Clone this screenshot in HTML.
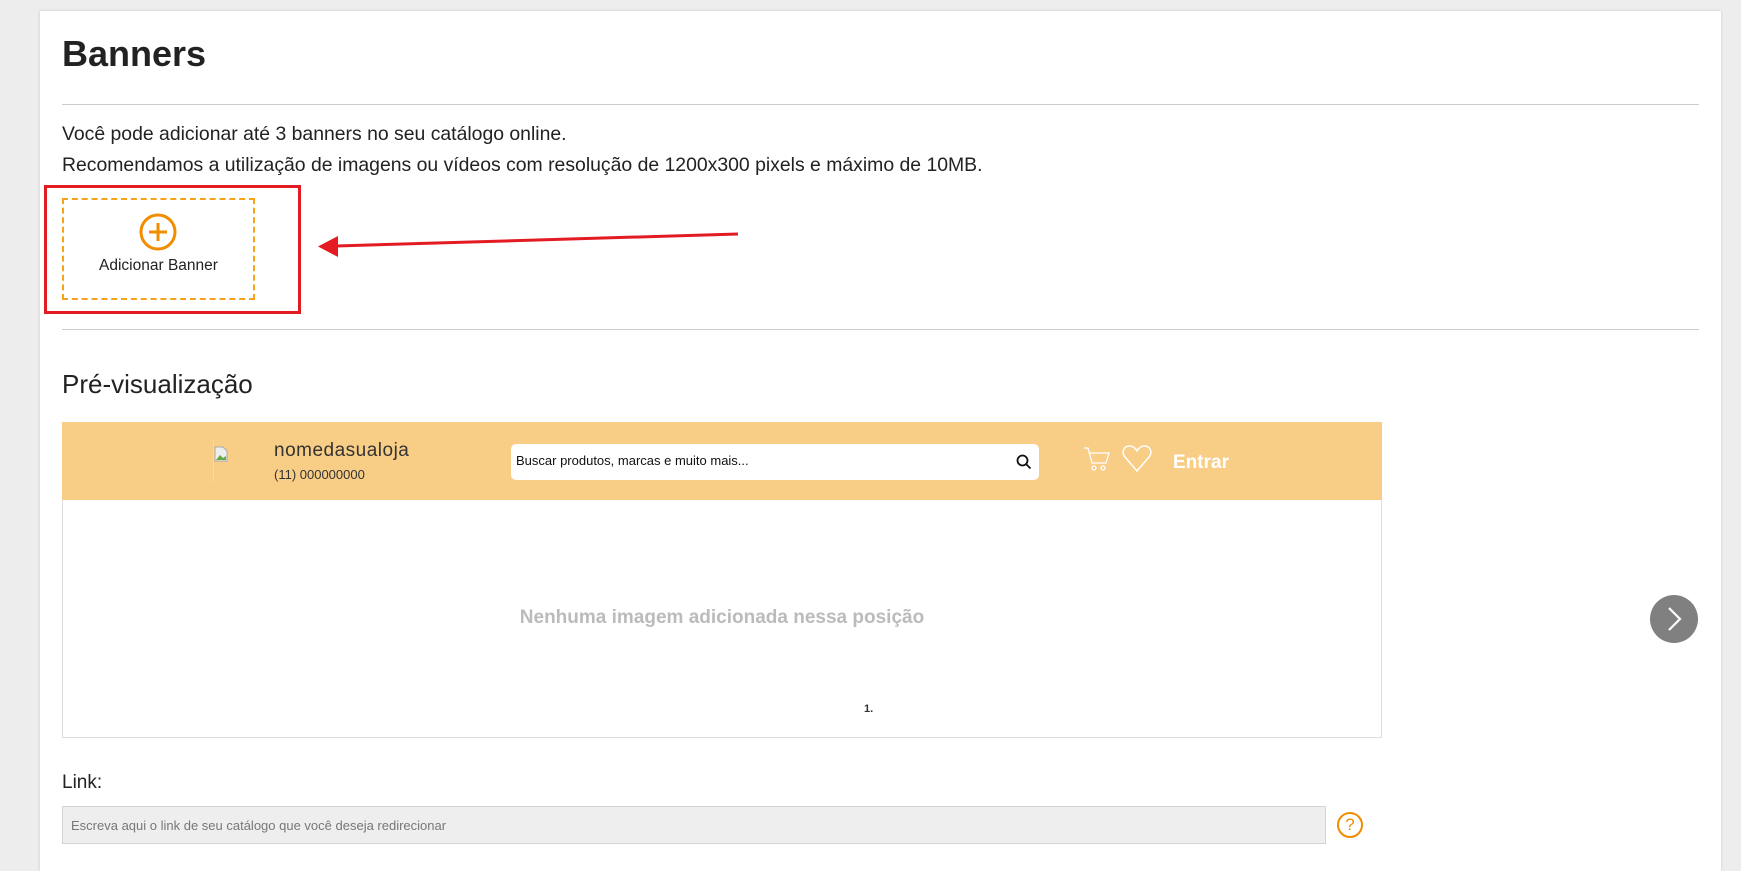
<!DOCTYPE html>
<html><head><meta charset="utf-8"><style>
*{box-sizing:border-box;margin:0;padding:0}
body{width:1741px;height:856px;overflow:hidden;background:#ededed;font-family:"Liberation Sans",sans-serif;color:#222;position:relative}
.card{position:absolute;left:40px;top:11px;width:1681px;height:860px;background:#fff;box-shadow:0 0 3px rgba(0,0,0,.15)}
.a{position:absolute;white-space:nowrap}
.hr{position:absolute;left:62px;width:1637px;height:1px;background:#ccc}
</style></head><body>
<div class="card"></div>
<div class="a" style="left:62px;top:33px;font-size:36px;font-weight:bold;color:#222">Banners</div>
<div class="hr" style="top:104px"></div>
<div class="a" style="left:62px;top:123px;font-size:19.4px">Você pode adicionar até 3 banners no seu catálogo online.</div>
<div class="a" style="left:62px;top:154px;font-size:19.4px">Recomendamos a utilização de imagens ou vídeos com resolução de 1200x300 pixels e máximo de 10MB.</div>
<div class="a" style="left:44px;top:185px;width:257px;height:129px;border:3px solid #e31b23"></div>
<div class="a" style="left:62px;top:198px;width:193px;height:102px;border:2px dashed #f7a21b"></div>
<svg class="a" style="left:138px;top:212px" width="40" height="40" viewBox="0 0 40 40"><circle cx="20" cy="20" r="17" fill="none" stroke="#f08c00" stroke-width="3"/><path d="M20 11v18M11 20h18" stroke="#f08c00" stroke-width="3"/></svg>
<div class="a" style="left:62px;width:193px;text-align:center;top:257px;font-size:15.5px">Adicionar Banner</div>
<svg class="a" style="left:0;top:0" width="800" height="300"><path d="M738 234L336 246" stroke="#e31b23" stroke-width="3"/><path d="M318 246.5L338 236L338 257Z" fill="#e31b23"/></svg>
<div class="hr" style="top:329px"></div>
<div class="a" style="left:62px;top:369px;font-size:26px;color:#222">Pré-visualização</div>
<div class="a" style="left:62px;top:422px;width:1320px;height:316px;border:1px solid #ddd;border-top:none"></div>
<div class="a" style="left:62px;top:422px;width:1320px;height:78px;background:#f8cd86"></div>
<div class="a" style="left:213px;top:440px;width:45px;height:42px;border-left:1px solid #ddd"></div>
<svg class="a" style="left:214px;top:446px" width="14" height="16" viewBox="0 0 14 16"><path d="M1 1h8l4 4v10H1Z" fill="#eee" stroke="#aaa"/><path d="M2 14l4-5 3 3 3-2v4Z" fill="#6a4"/></svg>
<div class="a" style="left:274px;top:440px;font-size:19px;color:#333;letter-spacing:.5px">nomedasualoja</div>
<div class="a" style="left:274px;top:467px;font-size:13px;color:#333">(11) 000000000</div>
<div class="a" style="left:511px;top:444px;width:528px;height:36px;background:#fff;border-radius:5px"></div>
<div class="a" style="left:516px;top:453px;font-size:13px;color:#111">Buscar produtos, marcas e muito mais...</div>
<svg class="a" style="left:1016px;top:454px" width="16" height="16" viewBox="0 0 16 16"><circle cx="6.5" cy="6.5" r="5" fill="none" stroke="#111" stroke-width="1.8"/><path d="M10 10l4.5 4.5" stroke="#111" stroke-width="1.8"/></svg>
<svg class="a" style="left:1083px;top:446px" width="28" height="28" viewBox="0 0 28 28" fill="none" stroke="#fff" stroke-width="1.3"><path d="M1 2h4l4 15h14l3-10H7"/><circle cx="11" cy="22" r="2"/><circle cx="20" cy="22" r="2"/></svg>
<svg class="a" style="left:1121px;top:443px" width="32" height="32" viewBox="0 0 32 32" fill="none" stroke="#fff" stroke-width="1.5"><path d="M16 28L4 14C0 9 3 3 8.5 3c3.5 0 6 2.5 7.5 5 1.5-2.5 4-5 7.5-5C29 3 32 9 28 14Z"/></svg>
<div class="a" style="left:1173px;top:452px;font-size:19px;font-weight:bold;color:#fff">Entrar</div>
<div class="a" style="left:62px;width:1320px;text-align:center;top:607px;font-size:19px;font-weight:bold;color:#bbb">Nenhuma imagem adicionada nessa posição</div>
<div class="a" style="left:864px;top:703px;font-size:11px;font-weight:bold;color:#333">1.</div>
<svg class="a" style="left:1650px;top:595px" width="48" height="48" viewBox="0 0 48 48"><circle cx="24" cy="24" r="24" fill="#808080"/><path d="M19 13l11 11-11 11" fill="none" stroke="#fff" stroke-width="2.2"/></svg>
<div class="a" style="left:62px;top:772px;font-size:19px;color:#222">Link:</div>
<div class="a" style="left:62px;top:806px;width:1264px;height:38px;background:#eee;border:1px solid #d4d4d4"></div>
<div class="a" style="left:71px;top:818px;font-size:13px;color:#777">Escreva aqui o link de seu catálogo que você deseja redirecionar</div>
<div class="a" style="left:1337px;top:812px;width:26px;height:26px;border:2px solid #f08c00;border-radius:50%;color:#f08c00;font-size:17px;text-align:center;line-height:22px">?</div>
</body></html>
